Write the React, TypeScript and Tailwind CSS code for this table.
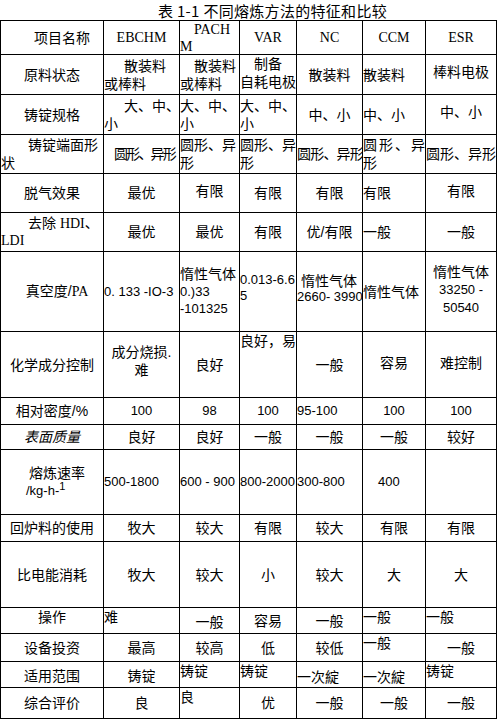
type Line = { s: React.ReactNode; cls?: string };
type Cell = { a: 'c' | 'l' | 't' | 'tc'; lines: Line[]; cls?: string };

const ALIGN: Record<Cell['a'], string> = {
  c: 'flex flex-col items-center justify-center text-center',
  l: 'flex flex-col items-start justify-center',
  t: 'flex flex-col items-start justify-start',
  tc: 'flex flex-col items-center justify-start',
};

const SERIF = "font-['Liberation_Serif','Noto_Sans_CJK_SC',serif]";
// digits run a bit narrower than the CJK text
const NUM = 'text-[13px]';

const c = (...s: string[]): Cell => ({ a: 'c', lines: s.map((x) => ({ s: x })) });
const l = (...s: string[]): Cell => ({ a: 'l', lines: s.map((x) => ({ s: x })) });
const t = (...s: string[]): Cell => ({ a: 't', lines: s.map((x) => ({ s: x })) });
const nc = (s: string): Cell => ({ a: 'c', lines: [{ s, cls: NUM }] });
const nl = (s: string): Cell => ({ a: 'l', lines: [{ s, cls: NUM }] });

// row heights include the bottom border line
const rows: { h: string; cells: Cell[] }[] = [
  {
    h: 'h-[34px]',
    cells: [
      { a: 'l', lines: [{ s: '项目名称', cls: 'pl-[33px]' }] },
      { a: 'c', cls: SERIF, lines: [{ s: 'EBCHM' }] },
      { a: 't', cls: SERIF + ' leading-[17px]', lines: [{ s: 'PACH', cls: 'pl-[14px]' }, { s: 'M' }] },
      { a: 'c', cls: SERIF, lines: [{ s: 'VAR' }] },
      { a: 'c', cls: SERIF, lines: [{ s: 'NC' }] },
      { a: 'c', cls: SERIF, lines: [{ s: 'CCM' }] },
      { a: 'c', cls: SERIF, lines: [{ s: 'ESR' }] },
    ],
  },
  {
    h: 'h-[40px]',
    cells: [
      c('原料状态'),
      { a: 'l', lines: [{ s: '散装料', cls: 'pl-[20px]' }, { s: '或棒料' }] },
      { a: 'l', lines: [{ s: '散装料', cls: 'pl-[14px]' }, { s: '或棒料' }] },
      { a: 'c', cls: 'pb-[3px]', lines: [{ s: '制备' }, { s: '自耗电极' }] },
      c('散装料'),
      l('散装料'),
      { a: 'c', cls: 'pb-[6px]', lines: [{ s: '棒料电极' }] },
    ],
  },
  {
    h: 'h-[40px]',
    cells: [
      c('铸锭规格'),
      { a: 'l', lines: [{ s: '大、中、', cls: 'pl-[20px]' }, { s: '小' }] },
      l('大、中、', '小'),
      l('大、中、', '小'),
      c('中、小'),
      l('中、小'),
      { a: 'c', cls: 'pb-[5px]', lines: [{ s: '中、小' }] },
    ],
  },
  {
    h: 'h-[39px]',
    cells: [
      { a: 'l', lines: [{ s: '铸锭端面形', cls: 'pl-[27px]' }, { s: '状' }] },
      { a: 'c', cls: 'tracking-[-1.8px] pl-[6px]', lines: [{ s: '圆形、异形' }] },
      l('圆形、异', '形'),
      l('圆形、异', '形'),
      { a: 'l', cls: 'tracking-[-0.8px]', lines: [{ s: '圆形、异形' }] },
      { a: 'l', lines: [{ s: '圆形、异', cls: 'tracking-[2px]' }, { s: '形' }] },
      l('圆形、异形'),
    ],
  },
  {
    h: 'h-[39px]',
    cells: [
      c('脱气效果'),
      c('最优'),
      { a: 'c', cls: 'pb-[4px]', lines: [{ s: '有限' }] },
      c('有限'),
      c('有限'),
      l('有限'),
      { a: 'c', cls: 'pb-[4px]', lines: [{ s: '有限' }] },
    ],
  },
  {
    h: 'h-[39px]',
    cells: [
      {
        a: 'l',
        cls: 'leading-[16px]',
        lines: [
          { s: <>去除 <span className={SERIF}>HDI</span>、</>, cls: 'pl-[27px]' },
          { s: <span className={SERIF}>LDI</span> },
        ],
      },
      c('最优'),
      c('最优'),
      c('有限'),
      c('优/有限'),
      l('一般'),
      c('一般'),
    ],
  },
  {
    h: 'h-[80px]',
    cells: [
      { a: 'c', cls: 'pl-[10px]', lines: [{ s: <>真空度/<span className={SERIF}>PA</span></> }] },
      nl('0. 133 -IO-3'),
      {
        a: 'l',
        cls: 'leading-[17px]',
        lines: [{ s: '惰性气体' }, { s: '0.)33', cls: NUM }, { s: '-101325', cls: NUM }],
      },
      { a: 'l', cls: 'leading-[16px] pb-[8px]', lines: [{ s: '0.013-6.6', cls: NUM }, { s: '5', cls: NUM }] },
      {
        a: 'l',
        cls: 'leading-[16px] pb-[6px]',
        lines: [{ s: '惰性气体', cls: 'pl-[4px]' }, { s: '2660- 3990', cls: NUM }],
      },
      l('惰性气体'),
      {
        a: 'c',
        cls: 'leading-[18px] pb-[4px]',
        lines: [{ s: '惰性气体' }, { s: '33250 -', cls: NUM }, { s: '50540', cls: NUM }],
      },
    ],
  },
  {
    h: 'h-[66px]',
    cells: [
      c('化学成分控制'),
      { a: 'c', cls: 'pb-[8px]', lines: [{ s: '成分烧损.' }, { s: '难' }] },
      c('良好'),
      t('良好，易'),
      c('一般'),
      { a: 'c', cls: 'pb-[3px]', lines: [{ s: '容易' }] },
      { a: 'c', cls: 'pb-[3px]', lines: [{ s: '难控制' }] },
    ],
  },
  {
    h: 'h-[27px]',
    cells: [c('相对密度/%'), nc('100'), nc('98'), nc('100'), nl('95-100'), nc('100'), nc('100')],
  },
  {
    h: 'h-[25px]',
    cells: [
      { a: 'c', cls: 'italic', lines: [{ s: '表面质量' }] },
      c('良好'),
      c('良好'),
      c('一般'),
      c('一般'),
      c('一般'),
      c('较好'),
    ],
  },
  {
    h: 'h-[65px]',
    cells: [
      {
        a: 'l',
        lines: [
          { s: '熔炼速率', cls: 'pl-[28px]' },
          {
            s: (
              <>
                /kg-h-<sup className="text-[11px]">1</sup>
              </>
            ),
            cls: 'pl-[25px] ' + NUM,
          },
        ],
      },
      nl('500-1800'),
      nl('600 - 900'),
      nl('800-2000'),
      nl('300-800'),
      { a: 'l', lines: [{ s: '400', cls: 'pl-[15px] ' + NUM }] },
      l(''),
    ],
  },
  {
    h: 'h-[27px]',
    cells: [c('回炉料的使用'), c('牧大'), c('较大'), c('有限'), c('较大'), c('有限'), c('有限')],
  },
  {
    h: 'h-[66px]',
    cells: [c('比电能消耗'), c('牧大'), c('较大'), c('小'), c('较大'), c('大'), c('大')],
  },
  {
    h: 'h-[26px]',
    cells: [
      { a: 'tc', lines: [{ s: '操作' }] },
      t('难'),
      { a: 'c', cls: 'pt-[3px]', lines: [{ s: '一般' }] },
      c('容易'),
      c('一般'),
      t('一般'),
      t('一般'),
    ],
  },
  {
    h: 'h-[28px]',
    cells: [c('设备投资'), c('最高'), c('较高'), c('低'), c('较低'), t('一般'), c('一般')],
  },
  {
    h: 'h-[26px]',
    cells: [
      { a: 'c', cls: 'pt-[3px]', lines: [{ s: '适用范围' }] },
      { a: 'c', cls: 'pt-[3px]', lines: [{ s: '铸锭' }] },
      t('铸锭'),
      t('铸锭'),
      { a: 'l', cls: 'pt-[4px]', lines: [{ s: '一次綻' }] },
      { a: 'l', cls: 'pt-[4px]', lines: [{ s: '一次綻' }] },
      t('铸锭'),
    ],
  },
  {
    h: 'h-[31px]',
    cells: [c('综合评价'), c('良'), t('良'), c('优'), c('一般'), c('一般'), c('一般')],
  },
];

export default function App() {
  return (
    <div className="w-[497px] h-[719px] overflow-hidden bg-white text-black text-[14px] leading-[18px] font-['Liberation_Sans','Noto_Sans_CJK_SC',sans-serif]">
      <div className="h-[20px] pl-[158px] text-[15px] leading-[22px] tracking-[0.3px] whitespace-nowrap font-['Noto_Sans_CJK_SC',sans-serif]">
        表 1-1 不同熔炼方法的特征和比较
      </div>

      <div className="grid grid-cols-[103px_76px_60px_57px_66px_63px_71px] border-l border-t border-black w-[497px]">
        {rows.map((row, ri) =>
          row.cells.map((cell, ci) => (
            <div
              key={`${ri}-${ci}`}
              className={`${row.h} ${ALIGN[cell.a]} ${cell.cls ?? ''} border-r border-b border-black overflow-hidden whitespace-nowrap`}
            >
              {cell.lines.map((ln, li) => (
                <span key={li} className={`block ${ln.cls ?? ''}`}>
                  {ln.s}
                </span>
              ))}
            </div>
          ))
        )}
      </div>
    </div>
  );
}
